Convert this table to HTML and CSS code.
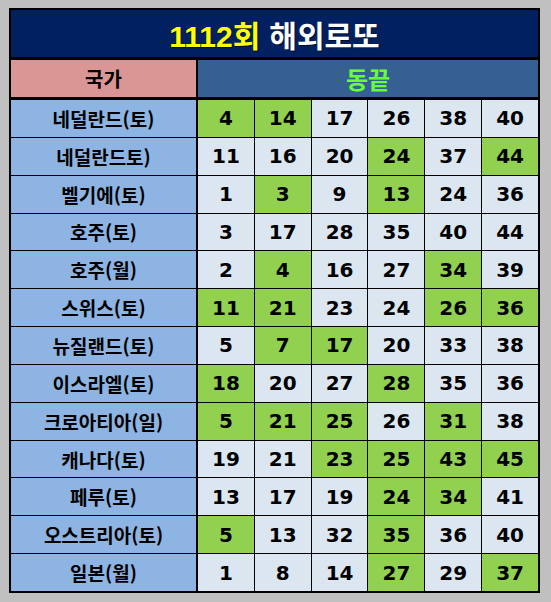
FILE: index.html
```html
<!DOCTYPE html>
<html lang="ko">
<head>
<meta charset="utf-8">
<title>1112회 해외로또</title>
<link rel="stylesheet" href="styles.css">
</head>
<body>
<div class="sheet">
  <div class="title"><span class="yel">1112회</span> <span class="wht">해외로또</span></div>
  <div class="head">
    <div class="h-country">국가</div>
    <div class="h-nums">동끝</div>
  </div>
  <div class="rows">
    <div class="row"><div class="country">네덜란드(토)</div><div class="nums"><div class="n g">4</div><div class="n g">14</div><div class="n">17</div><div class="n">26</div><div class="n">38</div><div class="n">40</div></div></div>
    <div class="row"><div class="country">네덜란드토)</div><div class="nums"><div class="n">11</div><div class="n">16</div><div class="n">20</div><div class="n g">24</div><div class="n">37</div><div class="n g">44</div></div></div>
    <div class="row"><div class="country">벨기에(토)</div><div class="nums"><div class="n">1</div><div class="n g">3</div><div class="n">9</div><div class="n g">13</div><div class="n">24</div><div class="n">36</div></div></div>
    <div class="row"><div class="country">호주(토)</div><div class="nums"><div class="n">3</div><div class="n">17</div><div class="n">28</div><div class="n">35</div><div class="n">40</div><div class="n">44</div></div></div>
    <div class="row"><div class="country">호주(월)</div><div class="nums"><div class="n">2</div><div class="n g">4</div><div class="n">16</div><div class="n">27</div><div class="n g">34</div><div class="n">39</div></div></div>
    <div class="row"><div class="country">스위스(토)</div><div class="nums"><div class="n g">11</div><div class="n g">21</div><div class="n">23</div><div class="n">24</div><div class="n g">26</div><div class="n g">36</div></div></div>
    <div class="row"><div class="country">뉴질랜드(토)</div><div class="nums"><div class="n">5</div><div class="n g">7</div><div class="n g">17</div><div class="n">20</div><div class="n">33</div><div class="n">38</div></div></div>
    <div class="row"><div class="country">이스라엘(토)</div><div class="nums"><div class="n g">18</div><div class="n">20</div><div class="n">27</div><div class="n g">28</div><div class="n">35</div><div class="n">36</div></div></div>
    <div class="row"><div class="country">크로아티아(일)</div><div class="nums"><div class="n g">5</div><div class="n g">21</div><div class="n g">25</div><div class="n">26</div><div class="n g">31</div><div class="n">38</div></div></div>
    <div class="row"><div class="country">캐나다(토)</div><div class="nums"><div class="n">19</div><div class="n">21</div><div class="n g">23</div><div class="n g">25</div><div class="n g">43</div><div class="n g">45</div></div></div>
    <div class="row"><div class="country">페루(토)</div><div class="nums"><div class="n">13</div><div class="n">17</div><div class="n">19</div><div class="n g">24</div><div class="n g">34</div><div class="n">41</div></div></div>
    <div class="row"><div class="country">오스트리아(토)</div><div class="nums"><div class="n g">5</div><div class="n">13</div><div class="n">32</div><div class="n g">35</div><div class="n">36</div><div class="n">40</div></div></div>
    <div class="row"><div class="country">일본(월)</div><div class="nums"><div class="n">1</div><div class="n">8</div><div class="n">14</div><div class="n g">27</div><div class="n">29</div><div class="n g">37</div></div></div>
  </div>
</div>
</body>
</html>
```
FILE: styles.css
```css
html, body {
  margin: 0;
  padding: 0;
  background: #c0c0c0;
}
body {
  width: 551px;
  height: 602px;
  overflow: hidden;
  padding-top: 8px;
  box-sizing: border-box;
}
.sheet {
  margin-left: 9px;
  width: 531px;
  height: 585px;
  box-sizing: border-box;
  border: 2px solid #000;
  background: #000;
  display: flex;
  flex-direction: column;
}
.title {
  height: 47px;
  margin-bottom: 3px;
  background: #002060;
  display: flex;
  align-items: center;
  justify-content: center;
  gap: 9px;
  font-family: "Liberation Sans", "Noto Sans CJK KR", sans-serif;
  font-weight: bold;
  font-size: 30px;
  text-shadow: 1px 1px 0 rgba(0, 0, 0, 0.6);
}
.yel { color: #ffff00; }
.wht { color: #ffffff; }
.head {
  height: 37px;
  margin-bottom: 3px;
  display: flex;
  font-family: "Noto Sans CJK KR", sans-serif;
  font-weight: bold;
}
.h-country {
  width: 185px;
  margin-right: 2px;
  background: #da9694;
  color: #000;
  font-size: 20px;
  display: flex;
  align-items: center;
  justify-content: center;
}
.h-nums {
  flex: 1;
  background: #366092;
  color: #66ff33;
  font-size: 24px;
  display: flex;
  align-items: center;
  justify-content: center;
}
.rows {
  flex: 1;
  display: flex;
  flex-direction: column;
  gap: 1px;
}
.row {
  flex: 1;
  display: flex;
}
.country {
  width: 185px;
  margin-right: 2px;
  background: #8db4e2;
  color: #000;
  font-family: "Noto Sans CJK KR", sans-serif;
  font-weight: bold;
  font-size: 19px;
  display: flex;
  align-items: center;
  justify-content: center;
}
.nums {
  flex: 1;
  display: flex;
  gap: 1px;
}
.n {
  flex: 1;
  background: #dce6f1;
  color: #000;
  font-family: "DejaVu Sans", sans-serif;
  font-weight: bold;
  font-size: 20px;
  display: flex;
  align-items: center;
  justify-content: center;
}
.n.g {
  background: #92d050;
}
```
